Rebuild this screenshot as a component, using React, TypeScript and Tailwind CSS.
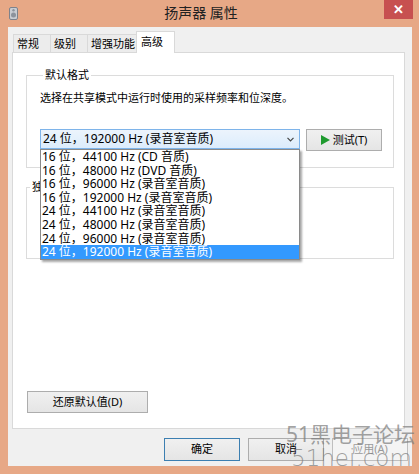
const formats = [
  "16 位，44100 Hz (CD 音质)",
  "16 位，48000 Hz (DVD 音质)",
  "16 位，96000 Hz (录音室音质)",
  "16 位，192000 Hz (录音室音质)",
  "24 位，44100 Hz (录音室音质)",
  "24 位，48000 Hz (录音室音质)",
  "24 位，96000 Hz (录音室音质)",
  "24 位，192000 Hz (录音室音质)",
];

const tabs = ["常规", "级别", "增强功能", "高级"];

const SpeakerIcon = () => (
  <svg width="9" height="13" viewBox="0 0 9 13">
    <rect x="0.5" y="0.5" width="8" height="12" rx="1.5" fill="#c9ccd2" stroke="#7d828c" />
    <circle cx="4.5" cy="8" r="2.5" fill="#8c929c" />
    <circle cx="4.5" cy="3.2" r="1.2" fill="#8c929c" />
  </svg>
);

const App = () => {
  return (
    <div
      className="relative flex h-[474px] w-[419px] flex-col overflow-hidden bg-[#e7a886] text-[11px] text-black"
      style={{ fontFamily: '"Noto Sans", "Noto Sans CJK SC", sans-serif' }}
    >
      {/* title bar */}
      <div className="flex h-[27px] items-start">
        <div className="ml-[9px] mt-[7px]">
          <SpeakerIcon />
        </div>
        <div className="flex-1 pt-[4px] text-center text-[14px] leading-[18px] text-[#222]">扬声器 属性</div>
        <div className="mr-[6px] flex h-[19px] w-[29px] items-center justify-center bg-[#c75050] text-[13px] font-bold leading-none text-white">
          ✕
        </div>
      </div>

      {/* client */}
      <div className="mx-[8px] mb-[8px] flex w-[404px] flex-1 flex-col bg-[#f0f0f0] pt-[4px]">
        {/* tabs */}
        <div className="flex h-[21px] items-end pl-[5px]">
          {tabs.map((t, i) =>
            i === 3 ? (
              <div
                key={t}
                className="relative z-10 -mb-px flex h-[22px] w-[39px] items-start whitespace-nowrap border border-b-0 border-[#d9d9d9] bg-white pl-[4px] pt-[3px] leading-[14px]"
              >
                {t}
              </div>
            ) : (
              <div
                key={t}
                className="flex h-[18px] items-center whitespace-nowrap border border-b-0 border-r-0 border-[#d9d9d9] bg-[#ececec] px-[3px] leading-[14px]"
                style={{ width: i === 2 ? 49 : 37 }}
              >
                {t}
              </div>
            )
          )}
        </div>

        {/* panel */}
        <div className="ml-[4px] mr-[7px] flex h-[377px] flex-col border border-[#d9d9d9] bg-white">
          <fieldset className="ml-[13px] mt-[14px] w-[368px] border border-[#dcdcdc] pb-[16px] pl-[13px]">
            <legend className="ml-[3px] px-[2px] leading-[16px]">默认格式</legend>
            <div className="pt-[7px] leading-[16px]">选择在共享模式中运行时使用的采样频率和位深度。</div>
            <div className="mt-[23px] flex items-start">
              <div className="relative z-20 text-[12px]">
                <div className="flex h-[20px] w-[260px] items-center justify-between whitespace-nowrap border border-[#7eb4ea] bg-gradient-to-b from-[#ecf4fc] to-[#dcecfc] pl-[2px] pr-[5px]">
                  <span>24 位，192000 Hz (录音室音质)</span>
                  <svg width="7" height="5" viewBox="0 0 7 5">
                    <path d="M0.5 0.8 L3.5 3.8 L6.5 0.8" fill="none" stroke="#444" strokeWidth="1.2" />
                  </svg>
                </div>
                <div className="absolute left-0 top-[20px] w-[260px] border border-[#8a8a8a] bg-white shadow-[2px_2px_2px_rgba(0,0,0,0.35)]">
                  {formats.map((f, i) => (
                    <div
                      key={f}
                      className={
                        i === formats.length - 1
                          ? "h-[13.6px] whitespace-nowrap bg-[#3399ff] pl-[1px] leading-[13.6px] text-white"
                          : "h-[13.6px] whitespace-nowrap pl-[1px] leading-[13.6px]"
                      }
                    >
                      {f}
                    </div>
                  ))}
                </div>
              </div>
              <div className="ml-[6px] flex h-[22px] w-[76px] items-center justify-center gap-[3px] border border-[#adadad] bg-gradient-to-b from-[#f0f0f0] to-[#e5e5e5]">
                <svg width="9" height="10" viewBox="0 0 9 10">
                  <path d="M0 0 L9 5 L0 10 Z" fill="#1e9a2e" />
                </svg>
                <span>测试(T)</span>
              </div>
            </div>
          </fieldset>

          <fieldset className="ml-[13px] mt-[11px] h-[80px] w-[368px] border border-[#dcdcdc]">
            <legend className="ml-[3px] px-[2px] leading-[16px]">独占模式</legend>
          </fieldset>

          <div className="flex-1" />
          <div className="mb-[15px] ml-[14px] flex h-[22px] w-[121px] items-center justify-center border border-[#adadad] bg-gradient-to-b from-[#f0f0f0] to-[#e5e5e5]">
            还原默认值(D)
          </div>
        </div>

        {/* bottom buttons */}
        <div className="flex justify-end gap-[8px] pr-[4px] pt-[9px]">
          <div className="flex h-[23px] w-[76px] items-center justify-center border border-[#3c7fb1] bg-gradient-to-b from-[#f0f0f0] to-[#e5e5e5]">
            确定
          </div>
          <div className="flex h-[23px] w-[76px] items-center justify-center border border-[#adadad] bg-gradient-to-b from-[#f0f0f0] to-[#e5e5e5]">
            取消
          </div>
          <div className="flex h-[23px] w-[76px] items-center justify-center border border-[#bfbfbf] bg-[#f4f4f4] text-[#9a9a9a]">
            应用(A)
          </div>
        </div>
      </div>

      {/* watermark */}
      <div className="pointer-events-none absolute left-[286px] top-[422px] whitespace-nowrap text-[21px] leading-[24px] text-[#7a7a7a]/70">
        51黑电子论坛
      </div>
      <div
        className="pointer-events-none absolute left-[291px] top-[445px] whitespace-nowrap text-[23px] font-light leading-[26px] text-[#7a7a7a]/70"
        style={{ fontFamily: '"DejaVu Sans", sans-serif' }}
      >
        51hei.com
      </div>
    </div>
  );
};

export default App;
